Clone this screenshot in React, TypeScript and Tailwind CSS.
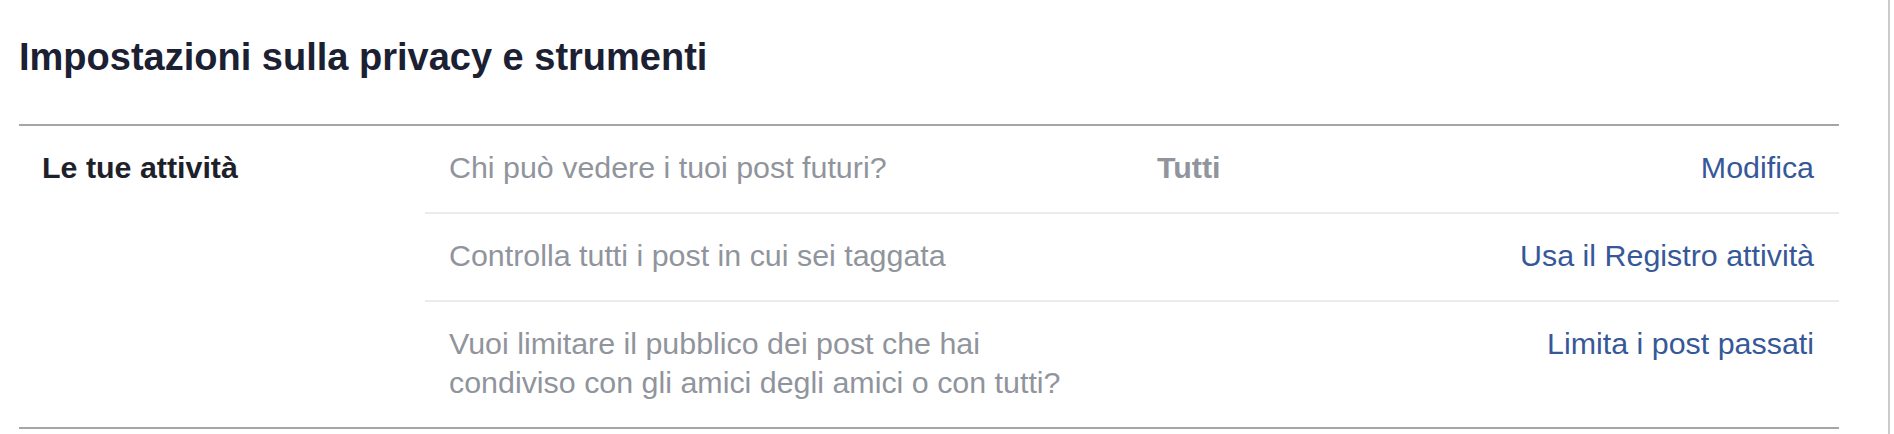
const rows = [
  {
    label: 'Chi può vedere i tuoi post futuri?',
    value: 'Tutti',
    action: 'Modifica',
  },
  {
    label: 'Controlla tutti i post in cui sei taggata',
    value: '',
    action: 'Usa il Registro attività',
  },
  {
    label:
      'Vuoi limitare il pubblico dei post che hai condiviso con gli amici degli amici o con tutti?',
    value: '',
    action: 'Limita i post passati',
  },
];

function SettingRow({
  row,
  isLast,
}: {
  row: (typeof rows)[number];
  isLast?: boolean;
}) {
  return (
    <div
      className={`flex pl-[24px] pr-[25px] pt-[22px] pb-[25px] ${
        isLast ? '' : 'border-b-2 border-[#e9ebee]'
      }`}
    >
      <div className="w-[708px] shrink-0">
        <p className="max-w-[650px] text-[#90949c]">{row.label}</p>
      </div>
      <div className="w-[200px] shrink-0 font-bold text-[#90949c]">
        {row.value}
      </div>
      <div className="flex-1 text-right text-[#365899]">{row.action}</div>
    </div>
  );
}

export default function App() {
  return (
    <div className="h-[434px] w-[1890px] border-r-2 border-[#cccccc] bg-white font-['Liberation_Sans',Arial,sans-serif]">
      <div className="w-[1839px] pl-[19px]">
        <h2 className="pt-[35px] text-[38px] leading-[44px] font-bold text-[#1b2033]">
          Impostazioni sulla privacy e strumenti
        </h2>

        <div className="mt-[45px] flex border-y-2 border-[#a6a6a6] text-[30.4px] leading-[39px]">
          <div className="w-[406px] shrink-0 pl-[23px] pt-[22px] font-bold text-[#1d2129]">
            Le tue attività
          </div>
          <div className="flex-1">
            {rows.map((row, i) => (
              <SettingRow key={row.action} row={row} isLast={i === rows.length - 1} />
            ))}
          </div>
        </div>
      </div>
    </div>
  );
}
